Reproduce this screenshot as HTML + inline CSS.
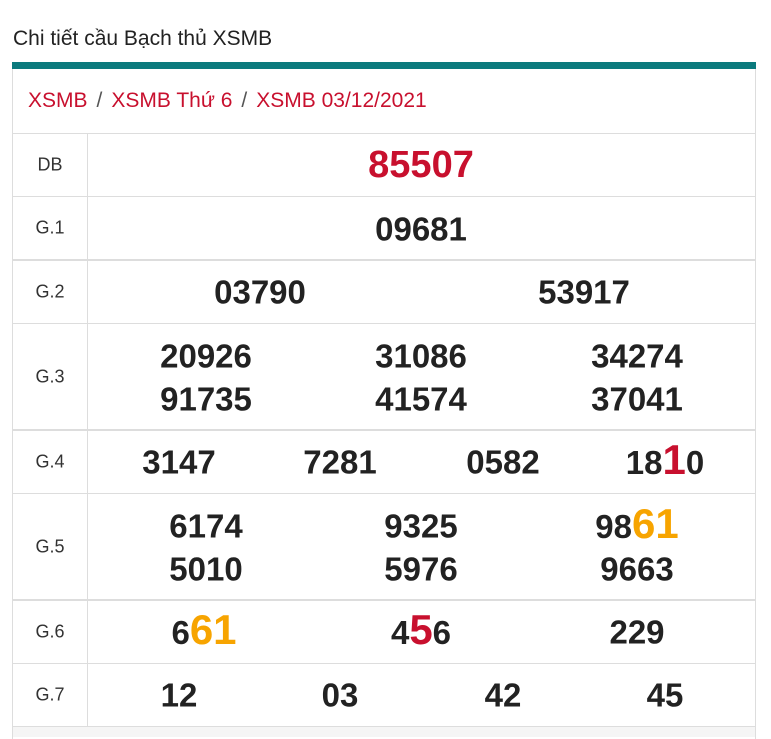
<!DOCTYPE html>
<html><head><meta charset="utf-8"><style>
body{margin:0;width:771px;height:731px;background:#fff;font-family:"Liberation Sans",sans-serif;position:relative;overflow:hidden}
.a{position:absolute}
.t{left:13px;top:27px;font-size:21px;color:#222}
.bar{left:12px;top:62px;width:744px;height:7px;background:#0b7a7d}
.box{left:12px;top:69px;width:742px;height:670px;border-left:1px solid #ddd;border-right:1px solid #ddd}
.bc{left:28px;top:89px;font-size:21px;color:#c8102e}
.bc span{color:#555;margin:0 9px}
.h{left:13px;width:742px;height:0;border-top:1px solid #ddd}
.hh{border-top:2px solid #ddd}
.v{left:87px;top:133px;width:0;height:593px;border-left:1px solid #ddd}
.l{left:13px;width:74px;text-align:center;font-size:18px;color:#333;transform:translateY(-50%)}
.n{font-size:33px;font-weight:bold;color:#222;transform:translate(-50%,-50%);white-space:nowrap;line-height:1}
.r{color:#c8102e}.o{color:#f7a400}
.big{font-size:42px}
.bot{left:13px;top:727px;width:742px;height:10px;background:#f5f5f5}
</style></head><body>
<div class="a t">Chi tiết cầu Bạch thủ XSMB</div>
<div class="a bar"></div>
<div class="a box"></div>
<div class="a bc">XSMB<span>/</span>XSMB Thứ 6<span>/</span>XSMB 03/12/2021</div>
<div class="a h" style="top:133px"></div>
<div class="a h" style="top:196px"></div>
<div class="a h hh" style="top:259px"></div>
<div class="a h" style="top:323px"></div>
<div class="a h hh" style="top:429px"></div>
<div class="a h" style="top:493px"></div>
<div class="a h hh" style="top:599px"></div>
<div class="a h" style="top:663px"></div>
<div class="a h" style="top:726px"></div>
<div class="a bot"></div>
<div class="a v"></div>
<div class="a l" style="top:165px">DB</div>
<div class="a l" style="top:228px">G.1</div>
<div class="a l" style="top:292px">G.2</div>
<div class="a l" style="top:377px">G.3</div>
<div class="a l" style="top:462px">G.4</div>
<div class="a l" style="top:547px">G.5</div>
<div class="a l" style="top:632px">G.6</div>
<div class="a l" style="top:695px">G.7</div>

<div class="a n r" style="left:421px;top:165px;font-size:38px">85507</div>
<div class="a n" style="left:421px;top:229px">09681</div>
<div class="a n" style="left:260px;top:292px">03790</div>
<div class="a n" style="left:584px;top:292px">53917</div>
<div class="a n" style="left:206px;top:356px">20926</div>
<div class="a n" style="left:421px;top:356px">31086</div>
<div class="a n" style="left:637px;top:356px">34274</div>
<div class="a n" style="left:206px;top:399px">91735</div>
<div class="a n" style="left:421px;top:399px">41574</div>
<div class="a n" style="left:637px;top:399px">37041</div>
<div class="a n" style="left:179px;top:462px">3147</div>
<div class="a n" style="left:340px;top:462px">7281</div>
<div class="a n" style="left:503px;top:462px">0582</div>
<div class="a n" style="left:665px;top:460px">18<span class="r big">1</span>0</div>
<div class="a n" style="left:206px;top:526px">6174</div>
<div class="a n" style="left:421px;top:526px">9325</div>
<div class="a n" style="left:637px;top:524px">98<span class="o big">61</span></div>
<div class="a n" style="left:206px;top:569px">5010</div>
<div class="a n" style="left:421px;top:569px">5976</div>
<div class="a n" style="left:637px;top:569px">9663</div>
<div class="a n" style="left:204px;top:630px">6<span class="o big">61</span></div>
<div class="a n" style="left:421px;top:630px">4<span class="r big">5</span>6</div>
<div class="a n" style="left:637px;top:632px">229</div>
<div class="a n" style="left:179px;top:695px">12</div>
<div class="a n" style="left:340px;top:695px">03</div>
<div class="a n" style="left:503px;top:695px">42</div>
<div class="a n" style="left:665px;top:695px">45</div>
</body></html>
